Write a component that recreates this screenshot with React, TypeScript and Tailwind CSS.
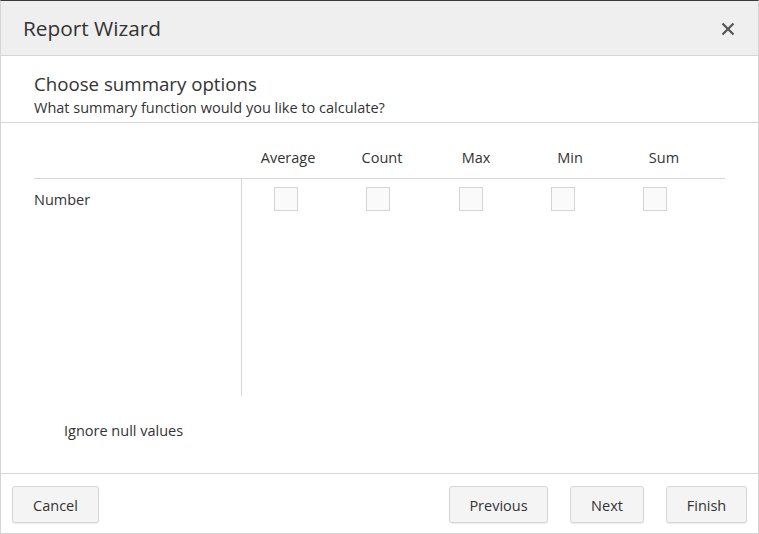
import React from "react";

const cols = ["Average", "Count", "Max", "Min", "Sum"];

function Btn({ children, className = "" }: { children: React.ReactNode; className?: string }) {
  return (
    <button
      className={`h-[37px] rounded-[3px] border border-[#d6d6d6] bg-[#f4f4f4] pt-[2px] text-[14.5px] text-[#333] shadow-[0_1px_1px_rgba(0,0,0,0.08)] ${className}`}
    >
      {children}
    </button>
  );
}

export default function App() {
  return (
    <div
      className="flex h-[534px] w-[759px] flex-col border border-t-[#3a3a3a] border-x-[#d4d4d4] border-b-[#d4d4d4] bg-white text-[#333]"
      style={{ fontFamily: '"Open Sans", "Noto Sans", sans-serif' }}
    >
      <div className="flex h-[55px] shrink-0 items-center justify-between border-b border-[#d6d6d6] bg-[#efefef] pl-[22px] pr-[22px]">
        <div className="text-[20.8px] leading-none text-[#333]">Report Wizard</div>
        <svg width="16" height="16" viewBox="0 0 16 16" className="mt-[1px]">
          <path d="M2.5 2.5 L13.5 13.5 M13.5 2.5 L2.5 13.5" stroke="#555" strokeWidth="2.2" strokeLinecap="butt" />
        </svg>
      </div>
      <div className="h-[67px] shrink-0 border-b border-[#d6d6d6] pl-[33px] pt-[16px]">
        <div className="text-[18.7px] leading-[24px]">Choose summary options</div>
        <div className="mt-[2px] text-[14.5px] leading-[20px]">What summary function would you like to calculate?</div>
      </div>
      <div className="flex flex-1 flex-col pl-[33px] pr-[33px]">
        <div className="flex h-[56px] items-end border-b border-[#d6d6d6] pb-[10px]">
          <div className="w-[207px] shrink-0" />
          <div className="grid grid-cols-[repeat(5,94px)] text-center text-[14.5px] leading-[20px]">
            {cols.map((c) => (
              <div key={c}>{c}</div>
            ))}
          </div>
        </div>
        <div className="flex h-[217px]">
          <div className="w-[208px] shrink-0 border-r border-[#d6d6d6] pt-[11px] text-[14.5px] leading-[20px]">
            Number
          </div>
          <div className="ml-[-2px] grid h-fit grid-cols-[repeat(5,92.25px)] pt-[8px]">
            {cols.map((c) => (
              <div key={c} className="flex justify-center">
                <div className="h-[24px] w-[24px] border border-[#d4d4d4] bg-[#fafafa]" />
              </div>
            ))}
          </div>
        </div>
        <div className="pl-[30px] pt-[25px] text-[14.5px] leading-[20px]">Ignore null values</div>
      </div>
      <div className="flex h-[60px] shrink-0 items-start justify-between border-t border-[#d6d6d6] pl-[11px] pr-[11px] pt-[12px]">
        <Btn className="w-[87px]">Cancel</Btn>
        <div className="flex gap-[22px]">
          <Btn className="w-[99px]">Previous</Btn>
          <Btn className="w-[74px]">Next</Btn>
          <Btn className="w-[81px]">Finish</Btn>
        </div>
      </div>
    </div>
  );
}
